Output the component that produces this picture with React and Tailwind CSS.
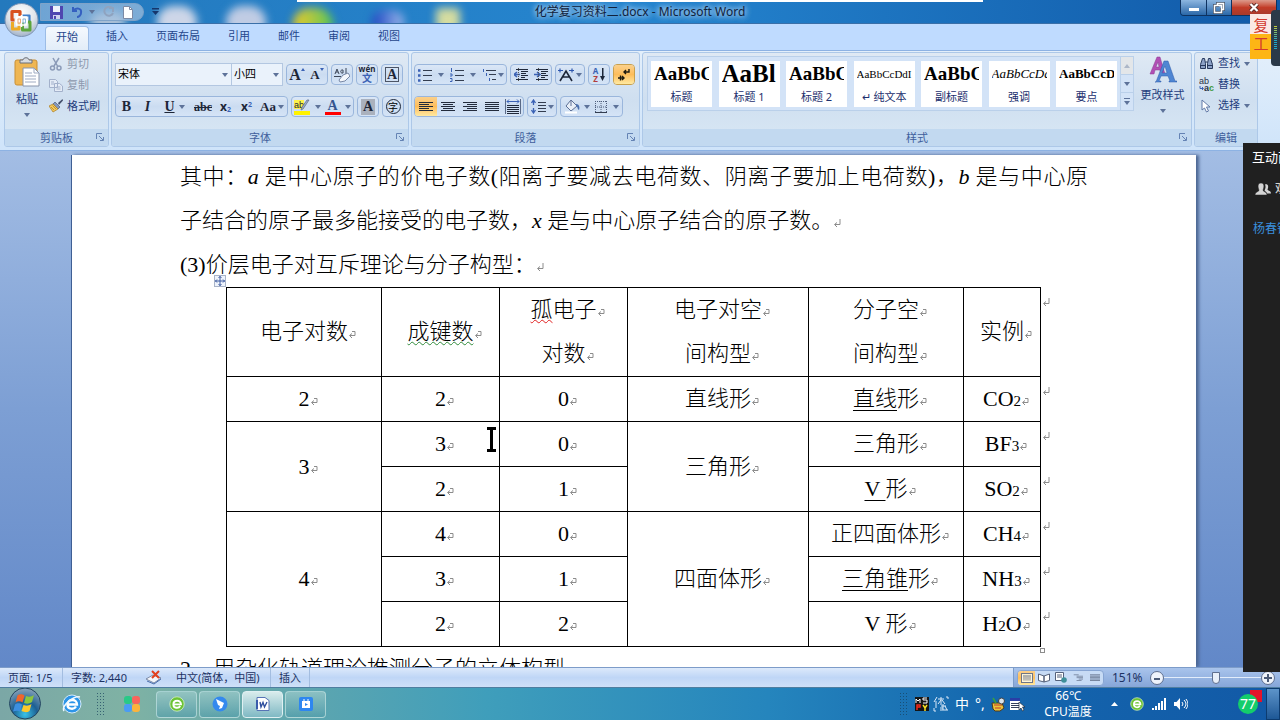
import { useState } from 'react';
import clsx from 'clsx';

const uiFont = "font-['Noto_Sans','Noto_Sans_CJK_SC',sans-serif]";
const docFont = "font-['Liberation_Serif','Noto_Sans_CJK_SC',serif]";

const tabs = ['开始', '插入', '页面布局', '引用', '邮件', '审阅', '视图'];

const styles = [
  { name: '标题', sample: 'AaBbC', look: 'text-[19px] font-bold' },
  { name: '标题 1', sample: 'AaBl', look: 'text-[25px] font-bold' },
  { name: '标题 2', sample: 'AaBbC', look: 'text-[19px] font-bold' },
  { name: '↵ 纯文本', sample: 'AaBbCcDdI', look: 'text-[11px]' },
  { name: '副标题', sample: 'AaBbC', look: 'text-[19px] font-bold' },
  { name: '强调', sample: 'AaBbCcDd', look: 'text-[13px] italic' },
  { name: '要点', sample: 'AaBbCcD', look: 'text-[13px] font-bold' },
];

function Caret({ className }) {
  return (
    <svg viewBox="0 0 6 4" className={clsx('h-1 w-1.5 shrink-0', className)}>
      <path d="M0 0h6L3 4z" fill="#5d7299" />
    </svg>
  );
}

function Strip({ children, className }) {
  return (
    <div className={clsx('flex h-[21px] shrink-0 items-stretch overflow-hidden rounded-sm border border-[#9ab6dc] bg-gradient-to-b from-[#dbe7f6] via-[#cbdcf1] to-[#d5e4f6]', className)}>
      {children}
    </div>
  );
}

function Tool({ label, children, className, caret, active }) {
  return (
    <button
      aria-label={label}
      className={clsx(
        'flex items-center justify-center',
        className || 'w-5 gap-0.5',
        active && 'bg-gradient-to-b from-[#fbd08a] via-[#fdbd5a] to-[#ffe9a0]'
      )}
    >
      {children}
      {caret && <Caret />}
    </button>
  );
}

function Group({ title, children, className, launcher = true }) {
  return (
    <section className={clsx('flex flex-col overflow-hidden rounded-[3px] border border-[#adc8e8] bg-gradient-to-b from-[#dfe9f4] via-[#cfdff0] to-[#d9e8f5]', className)}>
      <div className="flex-1">{children}</div>
      <div className="relative flex h-[17px] items-center justify-center bg-[#c2d9f0] text-[11px] leading-4 text-[#3f5f9c]">
        {title}
        {launcher && (
          <button aria-label={`${title}选项`} className="absolute right-1 top-1">
            <svg viewBox="0 0 8 8" className="h-2 w-2" fill="none" stroke="#6483b4">
              <path d="M.5 6V.5H6M3 3l4 4M7.500 4v3.500H4" />
            </svg>
          </button>
        )}
      </div>
    </section>
  );
}

function Lines({ rows, className, color = '#222b3c' }) {
  return (
    <svg viewBox="0 0 14 12" className={clsx(className || 'h-3 w-3.5')} stroke={color}>
      {rows.map(([x1, x2], i) => (
        <path key={i} d={`M${x1} ${i * 2 + 1.5}H${x2}`} />
      ))}
    </svg>
  );
}

const alignRows = {
  left: [[0, 14], [0, 10], [0, 14], [0, 10], [0, 14]],
  center: [[0, 14], [2, 12], [0, 14], [2, 12], [0, 14]],
  right: [[0, 14], [4, 14], [0, 14], [4, 14], [0, 14]],
  full: [[0, 14], [0, 14], [0, 14], [0, 14], [0, 14]],
};

function ListIcon({ kind }) {
  return (
    <svg viewBox="0 0 14 14" className="h-3.5 w-3.5" fill="none">
      {kind === 'multi' ? (
        <g>
          <path d="M4 2.500h10M7 6.500h7M10 11.500h4" stroke="#333d50" />
          <path d="M1.500 1v3M4.500 5v3M7.500 10v3" stroke="#3b62b5" />
        </g>
      ) : (
        <g>
          <path d="M5 2.500h9M5 7.500h9M5 12.500h9" stroke="#333d50" />
          {kind === 'bullet' ? (
            <path d="M0 2.500h2.500M0 7.500h2.500M0 12.500h2.500" stroke="#3b62b5" strokeWidth="2.500" />
          ) : (
            <path d="M1.500 0v4M0 6h2v2H0M0 10.500h2v3H0" stroke="#3b62b5" />
          )}
        </g>
      )}
    </svg>
  );
}

function IndentIcon({ right }) {
  return (
    <svg viewBox="0 0 15 14" className="h-3.5 w-[15px]" fill="none">
      <path d="M2 1.500h12M7 3.500h7M7 5.500h5M7 7.500h7M7 9.500h4M2 11.500h12" stroke="#20293a" />
      <path d={right ? 'M0 6.500h5M3 4l3 2.500L3 9' : 'M6 6.500H1M3 4L0 6.500 3 9'} stroke="#3b62b5" strokeWidth="1.500" />
      <path d="M4.500 0v13" stroke="#555" strokeDasharray="1 1" />
    </svg>
  );
}

function Clipboard() {
  return (
    <Group title="剪贴板" className="w-[105px]">
      <div className="flex">
        <button className="ml-1.5 mt-1 flex w-8 flex-col items-center text-[11px] leading-4 text-[#1f3d7c]">
          <svg viewBox="0 0 27 30" className="h-[30px] w-[27px]">
            <rect x="1" y="3" width="22" height="25" rx="2" fill="#efb652" stroke="#c98f35" />
            <path d="M6 6V3h3c0-3 6-3 6 0h3v3z" fill="#d8dce2" stroke="#6b6f78" />
            <path d="M9 11h11l5 5v13H9z" fill="#fff" stroke="#8894ab" />
            <path d="M20 11v5h5M11 16h7M11 19h11M11 22h11M11 25h11" fill="none" stroke="#9fabc2" />
          </svg>
          <span className="mt-1">粘贴</span>
          <Caret className="mt-1.5" />
        </button>
        <div className="ml-1.5 flex flex-col text-[11px] leading-5 text-[#1f3d7c]">
          <button className="flex h-[21px] items-center gap-1 text-[#8d99ae]">
            <svg viewBox="0 0 14 14" className="h-3.5 w-3.5" fill="none" stroke="#8b9bb8" strokeWidth="1.500">
              <path d="M4 1l4.500 8M10 1L5 9" />
              <circle cx="3.500" cy="11" r="2" />
              <circle cx="10" cy="11" r="2" />
            </svg>
            剪切
          </button>
          <button className="flex h-[21px] items-center gap-1 text-[#8d99ae]">
            <svg viewBox="0 0 14 14" className="h-3.5 w-3.5" fill="#e4ebf6" stroke="#a3b1cb">
              <path d="M.5 1.500h6l2 2v6h-8zM5.500 5.500h5l3 2.500v5.500h-8zM7.500 9h4M7.500 11h4M2 4h3M2 6h3" />
            </svg>
            复制
          </button>
          <button className="flex h-[21px] items-center gap-1">
            <svg viewBox="0 0 14 14" className="h-3.5 w-3.5">
              <path d="M13.500 0L9 4l1 2 4-4.500z" fill="#44506b" />
              <path d="M6 3l5 5-2 2-5-5z" fill="#8497bb" stroke="#4d5d7d" strokeWidth=".7" />
              <path d="M4 5L0 7l4 6 5-3z" fill="#f4c95c" stroke="#a97b22" strokeWidth=".7" />
              <path d="M2 8l3 3M3.500 6.500L7 10" stroke="#a97b22" strokeWidth=".7" />
            </svg>
            格式刷
          </button>
        </div>
      </div>
    </Group>
  );
}

function FontGroup() {
  const [font, setFont] = useState('宋体');
  const [size, setSize] = useState('小四');
  const serif = "font-['Liberation_Serif',serif] text-[#1d2638]";
  return (
    <Group title="字体" className="w-[298px]">
      <div className="flex flex-col gap-[10px] px-[3px] pt-2.5">
        <div className="flex h-[23px] items-center gap-[3px]">
          <div className="flex">
            <label className="relative flex w-[117px]">
              <select
                aria-label="字体"
                value={font}
                onChange={e => setFont(e.target.value)}
                className="h-[23px] w-full appearance-none border border-[#b3c7e1] bg-[#eaf2fb] pl-0.5 text-[11px] text-black"
              >
                <option>宋体</option>
                <option>黑体</option>
              </select>
              <Caret className="pointer-events-none absolute right-1 top-2.5" />
            </label>
            <label className="relative -ml-px flex w-[52px]">
              <select
                aria-label="字号"
                value={size}
                onChange={e => setSize(e.target.value)}
                className="h-[23px] w-full appearance-none border border-[#b3c7e1] bg-[#eaf2fb] pl-0.5 text-[11px] text-black"
              >
                <option>小四</option>
                <option>五号</option>
              </select>
              <Caret className="pointer-events-none absolute right-1 top-2.5" />
            </label>
          </div>
          <Strip>
            <Tool label="增大字体" className="w-5">
              <span className={clsx(serif, 'text-[16px] font-bold leading-4')}>A</span>
              <svg viewBox="0 0 4 3" className="-mt-2.5 h-[3px] w-1" fill="#3b62b5"><path d="M0 3h4L2 0z" /></svg>
            </Tool>
            <Tool label="缩小字体" className="w-5">
              <span className={clsx(serif, 'text-[13px] font-bold leading-4')}>A</span>
              <svg viewBox="0 0 4 3" className="-mt-2.5 h-[3px] w-1" fill="#3b62b5"><path d="M0 0h4L2 3z" /></svg>
            </Tool>
          </Strip>
          <Strip>
            <Tool label="清除格式">
              <svg viewBox="0 0 16 16" className="h-4 w-4" fill="none" stroke="#3d4759">
                <path d="M1 7l2-5 2 5M2 5h2M9 3c-3-1-3 4 0 3V3M12 1v6" />
                <path d="M0 9.500h7" />
                <path d="M9 8l5-2 2 3-5 5-5 1-1-2z" fill="#f4f7fc" stroke="#7787a5" />
              </svg>
            </Tool>
          </Strip>
          <Strip>
            <Tool label="拼音指南" className="w-5 flex-col">
              <span className="text-[8px] font-bold leading-[8px] text-[#1d2638]">wén</span>
              <span className="text-[10px] font-bold leading-[11px] text-[#3b62b5]">文</span>
            </Tool>
          </Strip>
          <Strip>
            <Tool label="字符边框">
              <span className={clsx(serif, 'border border-[#4c5566] px-px text-[14px] font-bold leading-[13px]')}>A</span>
            </Tool>
          </Strip>
        </div>
        <div className="flex h-[21px] items-center gap-[3px]">
          <Strip>
            <Tool label="加粗" className="w-[21px]"><b className={clsx(serif, 'text-[14px]')}>B</b></Tool>
            <Tool label="倾斜" className="w-[21px]"><i className={clsx(serif, 'text-[14px] font-bold')}>I</i></Tool>
            <Tool label="下划线" className="w-[33px] gap-1" caret><u className={clsx(serif, 'text-[14px] font-bold')}>U</u></Tool>
            <Tool label="删除线" className="w-6"><s className={clsx(serif, 'text-[12px] font-bold')}>abc</s></Tool>
            <Tool label="下标" className="w-[21px]"><span className="text-[12px] font-bold text-[#1d2638]">x<sub className="text-[7px] text-[#3b62b5]">2</sub></span></Tool>
            <Tool label="上标" className="w-[21px]"><span className="text-[12px] font-bold text-[#1d2638]">x<sup className="text-[7px] text-[#3b62b5]">2</sup></span></Tool>
            <Tool label="更改大小写" className="w-[30px] gap-0.5" caret><span className={clsx(serif, 'text-[13px] font-bold')}>Aa</span></Tool>
          </Strip>
          <Strip>
            <Tool label="突出显示" className="w-[30px] gap-1" caret>
              <svg viewBox="0 0 17 16" className="h-4 w-[17px]">
                <rect x="0" y="12" width="16" height="4" fill="#fff200" />
                <rect x="0" y="1" width="10" height="9" fill="#fdf24a" />
                <text x="0" y="9" fontSize="9" fill="#1d2638" fontFamily="Liberation Sans">ab</text>
                <path d="M15 1l-6 9-2 1 1-3 5-7z" fill="#9aacc9" stroke="#5a6a87" strokeWidth=".7" />
              </svg>
            </Tool>
            <Tool label="字体颜色" className="w-[31px] gap-1" caret>
              <span className="flex flex-col items-center">
                <b className="font-['Liberation_Serif',serif] text-[14px] leading-[13px] text-[#34548f]">A</b>
                <span className="h-[3px] w-4 bg-[#f00]" />
              </span>
            </Tool>
          </Strip>
          <Strip>
            <Tool label="字符底纹"><span className={clsx(serif, 'bg-[#aab1bd] px-0.5 text-[14px] font-bold leading-4')}>A</span></Tool>
          </Strip>
          <Strip>
            <Tool label="带圈字符"><span className="flex h-[15px] w-[15px] items-center justify-center rounded-full border border-[#1d2638] text-[10px] leading-3 text-black">字</span></Tool>
          </Strip>
        </div>
      </div>
    </Group>
  );
}

function ParagraphGroup() {
  return (
    <Group title="段落" className="w-[229px]">
      <div className="flex flex-col gap-[11px] px-0.5 pt-[11px]">
        <div className="flex items-center gap-[3px]">
          <Strip>
            <Tool label="项目符号" className="w-8 gap-1.5" caret><ListIcon kind="bullet" /></Tool>
            <Tool label="编号" className="w-8 gap-1.5" caret><ListIcon kind="number" /></Tool>
            <Tool label="多级列表" className="w-[27px] gap-0.5" caret><ListIcon kind="multi" /></Tool>
          </Strip>
          <Strip>
            <Tool label="减少缩进"><IndentIcon /></Tool>
            <Tool label="增加缩进"><IndentIcon right /></Tool>
          </Strip>
          <Strip>
            <Tool label="中文版式" className="w-7 gap-0.5" caret>
              <svg viewBox="0 0 16 14" className="h-3.5 w-4" fill="none" stroke="#1d2638" strokeWidth="1.600">
                <path d="M2 13l6-10 6 10M5 9h6" />
                <path d="M0 2.500h5M2 .5v4M11 2.500h5M14 .5v4" stroke="#2d56ad" strokeWidth="1.200" />
              </svg>
            </Tool>
          </Strip>
          <Strip>
            <Tool label="排序">
              <span className="flex flex-col text-[8px] font-bold leading-[8px]">
                <span className="text-[#3b62b5]">A</span>
                <span className="text-[#b23c3c]">Z</span>
              </span>
              <svg viewBox="0 0 5 13" className="h-[13px] w-[5px]" fill="#1d2638"><path d="M2 0h1.500v8H5l-2.500 5L0 8h2z" /></svg>
            </Tool>
          </Strip>
          <Strip className="border-[#c9a04c]">
            <Tool label="显示编辑标记" active>
              <svg viewBox="0 0 14 14" className="h-3.5 w-3.5" fill="none" stroke="#1d1a10" strokeWidth="1.400">
                <path d="M12 1v3H7M9 2L7 4l2 2M1 10h6M5 8l2 2-2 2M3.500 7.500v5" />
              </svg>
            </Tool>
          </Strip>
        </div>
        <div className="flex items-center gap-[3px]">
          <Strip>
            <Tool label="左对齐" active className="w-[22px]"><Lines rows={alignRows.left} /></Tool>
            <Tool label="居中" className="w-[22px]"><Lines rows={alignRows.center} /></Tool>
            <Tool label="右对齐" className="w-[22px]"><Lines rows={alignRows.right} /></Tool>
            <Tool label="两端对齐" className="w-[22px]"><Lines rows={alignRows.full} /></Tool>
            <Tool label="分散对齐">
              <svg viewBox="0 0 16 15" className="h-[15px] w-4" fill="none">
                <path d="M.5 0v15M15.500 0v15" stroke="#5a6a87" />
                <path d="M2 2.500h12M4 .5L2 2.500l2 2M12 .5l2 2-2 2" stroke="#3b62b5" />
                <path d="M2 6.500h12M2 8.500h12M2 10.500h12M2 12.500h12M2 14.500h12" stroke="#20293a" />
              </svg>
            </Tool>
          </Strip>
          <Strip>
            <Tool label="行距" className="w-7 gap-0.5" caret>
              <svg viewBox="0 0 15 15" className="h-[15px] w-[15px]" fill="none">
                <path d="M2.500 1v5M.5 4l2-3 2 3M2.500 9v5M.5 11l2 3 2-3" stroke="#3b62b5" strokeWidth="1.300" />
                <path d="M7 3.500h8M7 6.500h8M7 9.500h8M7 12.500h8" stroke="#333d50" />
              </svg>
            </Tool>
          </Strip>
          <Strip>
            <Tool label="底纹" className="w-[31px] gap-1" caret>
              <svg viewBox="0 0 16 15" className="h-[15px] w-4">
                <path d="M7 1l6 6-6 5-5-5z" fill="#e9eff8" stroke="#5c6f95" />
                <path d="M7 1v6" stroke="#5c6f95" />
                <path d="M12 5c3 0 4 3 3 6-2-1-1-4-3-4z" fill="#4a6fae" />
                <path d="M1 13.500h12" stroke="#fff" strokeWidth="2" />
              </svg>
            </Tool>
            <Tool label="框线" className="w-[30px] gap-1.5" caret>
              <svg viewBox="0 0 12 12" className="h-3 w-3" fill="none">
                <path d="M.5 0v12M11.500 0v12M0 .5h12M6 0v12M0 6h12" stroke="#4f5f7d" strokeDasharray="1 1" />
                <path d="M0 11.500h12" stroke="#333d50" />
              </svg>
            </Tool>
          </Strip>
        </div>
      </div>
    </Group>
  );
}

function StylesGroup() {
  return (
    <Group title="样式" className="min-w-0 flex-1">
      <div className="flex h-full pl-1 pt-[3px]">
        <div className="flex h-[55px] min-w-0 flex-1 border border-[#bad0ea] bg-[#d3e3f7]">
          <div className="flex min-w-0 flex-1 items-center justify-between px-[3px]">
            {styles.map(s => (
              <button key={s.name} className="flex h-[46px] w-[61px] flex-col overflow-hidden bg-white text-[11px] text-[#1c2f6e]">
                <span className="flex h-7 w-full items-center overflow-hidden px-[3px]">
                  <span className={clsx("overflow-hidden whitespace-nowrap font-['Liberation_Serif',serif] leading-7 text-black", s.look)}>{s.sample}</span>
                </span>
                <span className="w-full text-center leading-5">{s.name}</span>
              </button>
            ))}
          </div>
          <div className="flex w-[13px] flex-col divide-y divide-[#bad0ea] border-l border-[#bad0ea]">
            <button aria-label="上一行" className="flex flex-1 items-center justify-center bg-[#e3e6e9]"><Caret className="rotate-180 opacity-40" /></button>
            <button aria-label="下一行" className="flex flex-1 items-center justify-center"><Caret /></button>
            <button aria-label="其他" className="flex flex-1 flex-col items-center justify-center gap-0.5">
              <span className="h-px w-1.5 bg-[#5d7299]" />
              <Caret />
            </button>
          </div>
        </div>
        <button className="flex w-[57px] flex-col items-center text-[11px] leading-4 text-[#1f3d7c]">
          <svg viewBox="0 0 28 27" className="h-[27px] w-7">
            <path d="M1 18L8 1h3l5 17h-4l-1-4H6l-1 4zM7 11h3L9 6z" fill="#b14fb4" stroke="#8b3a92" strokeWidth=".5" />
            <path d="M6 26h1l8-21h4l7 20h2v1h-8v-1h1l-2-5h-7l-2 5h2v1zM13 17h5l-2-7z" fill="#4f86d3" stroke="#2d5ba8" strokeWidth=".5" />
          </svg>
          <span className="mt-1">更改样式</span>
          <Caret className="mt-1.5" />
        </button>
      </div>
    </Group>
  );
}

function EditGroup() {
  return (
    <Group title="编辑" className="w-[64px]" launcher={false}>
      <div className="flex flex-col pl-1 text-[11px] text-[#1f3d7c]">
        <button className="flex h-[21px] items-center gap-1 whitespace-nowrap">
          <svg viewBox="0 0 15 13" className="h-[13px] w-[15px]" fill="#8ba0c6" stroke="#27385c">
            <path d="M3.500 1.500h2l1 5v5h-5v-4zM9.500 1.500h2l2 6v4h-5v-5z" />
            <path d="M6.500 5h2M2 8.500h4M9 8.500h4" />
          </svg>
          查找<Caret />
        </button>
        <button className="flex h-[21px] items-center gap-1 whitespace-nowrap">
          <svg viewBox="0 0 15 15" className="h-[15px] w-[15px]" fontFamily="Liberation Sans" fontSize="9">
            <text x="0" y="7" fill="#2a3347">ab</text>
            <text x="5" y="14" fill="#2a3347" fontWeight="bold">a</text>
            <text x="10" y="14" fill="#3f9a3f" fontWeight="bold">c</text>
            <path d="M1 9v2.500h3M3 10l1.500 1.500L3 13" fill="none" stroke="#3b62b5" />
          </svg>
          替换
        </button>
        <button className="flex h-[21px] items-center gap-1 whitespace-nowrap">
          <svg viewBox="0 0 15 14" className="h-3.5 w-[15px]">
            <path d="M3 1v10l2.500-2 2 4 2-1-2-4H11z" fill="#fff" stroke="#6179a6" />
          </svg>
          选择<Caret />
        </button>
      </div>
    </Group>
  );
}

function TitleBar() {
  return (
    <header className="relative flex h-6 shrink-0 items-center justify-center overflow-hidden border-b border-[#3a6fa8] bg-gradient-to-r from-[#2479bd] via-[#2585cf] to-[#1159a8]">
      {/* desktop icons showing through the glass */}
      <div className="absolute left-[90px] top-3 h-6 w-9 rounded-full bg-[#a9bfd6] blur-xs" />
      <div className="absolute left-[157px] top-1.5 h-8 w-10 rounded-full bg-[#cdd6e8] blur-xs" />
      <div className="absolute left-[226px] top-1.5 h-8 w-10 rounded-full bg-[#c0cce4] blur-xs" />
      <div className="absolute left-[293px] top-2 h-8 w-10 rounded-full bg-gradient-to-r from-[#e8c820] to-[#4cc455] blur-xs" />
      <div className="absolute left-[372px] top-2.5 h-6 w-8 rounded-full bg-gradient-to-r from-[#1d3fc0] to-[#9eb7e8] blur-xs" />
      <div className="absolute left-[436px] top-2 h-6 w-6 rounded bg-[#d5dca0] blur-xs" />
      <div className="absolute left-[297px] top-0 h-0.5 w-[686px] bg-white" />
      <h1 className="relative text-[12px] leading-6 text-[#10223c] [text-shadow:0_0_6px_#cfe3f8,0_0_6px_#cfe3f8]">化学复习资料二.docx - Microsoft Word</h1>
      <div className="absolute left-10 top-[3px] flex h-[18px] w-[104px] items-center rounded-r-full border border-[#7ea3c9] bg-gradient-to-r from-[#8fb6dd]/70 to-[#b9cde4]/60 pl-[9px]">
        <button aria-label="保存" className="mr-2">
          <svg viewBox="0 0 13 13" className="h-[13px] w-[13px]"><path d="M0 0h13v13H0z" fill="#4f46b0" /><path d="M3 0h7v6H3z" fill="#eef1fb" /><path d="M3 9h7v4H3z" fill="#cfd2ee" /><path d="M4 10h2v3H4z" fill="#4f46b0" /></svg>
        </button>
        <button aria-label="撤消" className="flex items-center gap-1.5">
          <svg viewBox="0 0 12 12" className="h-3 w-3" fill="none" stroke="#3560c0" strokeWidth="2"><path d="M2 1v4h4M2 5c3-4 9-3 8 2 0 2-2 4-4 4" /></svg>
          <Caret />
        </button>
        <button aria-label="恢复" className="ml-2">
          <svg viewBox="0 0 12 12" className="h-3 w-3" fill="none" stroke="#8fa3bf" strokeWidth="2"><path d="M9 2a4.500 4.500 0 1 0 1 5M6 2h4v4" /></svg>
        </button>
        <button aria-label="新建" className="ml-2">
          <svg viewBox="0 0 10 13" className="h-[13px] w-2.5"><path d="M.5.5h6l3 3v9h-9z" fill="#fff" stroke="#7c8aa5" /><path d="M6.500.5v3h3" fill="none" stroke="#7c8aa5" /></svg>
        </button>
      </div>
      <button aria-label="自定义快速访问工具栏" className="absolute left-[152px] top-2">
        <svg viewBox="0 0 7 7" className="h-[7px] w-[7px]" fill="#16366b"><path d="M0 0h7v1.500H0zM0 3h7L3.500 7z" /></svg>
      </button>
      <div className="absolute right-[3px] top-0 flex h-4 overflow-hidden rounded-b border border-t-0 border-[#0e3260]">
        <button aria-label="最小化" className="flex w-[26px] items-center justify-center border-r border-[#0e3260] bg-gradient-to-b from-[#8db6e0] to-[#2a68a8]">
          <span className="mt-1 h-[3px] w-2.5 bg-white" />
        </button>
        <button aria-label="还原" className="flex w-[25px] items-center justify-center border-r border-[#0e3260] bg-gradient-to-b from-[#8db6e0] to-[#2a68a8]">
          <svg viewBox="0 0 12 12" className="h-3 w-3" fill="none">
            <path d="M4.500 1.500h6v6h-2v3h-7v-7h3z" stroke="#46546a" strokeWidth="3" />
            <path d="M4.500 3V1.500h6v6H9M1.500 3.500h7v7h-7z" stroke="#fff" strokeWidth="1.500" />
          </svg>
        </button>
        <button aria-label="关闭" className="flex w-11 items-center justify-center bg-gradient-to-b from-[#dc9a8c] via-[#c23c28] to-[#a83a2c]">
          <svg viewBox="0 0 10 9" className="h-[9px] w-2.5"><path d="M1.500 1l7 7M8.500 1l-7 7" stroke="#5c2d2a" strokeWidth="4" /><path d="M1.500 1l7 7M8.500 1l-7 7" stroke="#fff" strokeWidth="2.200" /></svg>
        </button>
      </div>
    </header>
  );
}

function OfficeButton() {
  return (
    <button aria-label="Office 按钮" className="absolute left-1 top-0.5 z-10">
      <svg viewBox="0 0 36 36" className="h-9 w-9">
        <defs>
          <radialGradient id="orb" cx=".5" cy=".3" r=".75">
            <stop offset="0" stopColor="#ffffff" />
            <stop offset=".55" stopColor="#dfe4ea" />
            <stop offset="1" stopColor="#97a9c2" />
          </radialGradient>
        </defs>
        <circle cx="17.500" cy="18" r="16.500" fill="url(#orb)" stroke="#7d94b5" />
        <g fill="none" strokeLinejoin="round">
          <path d="M10.500 18H8V9.500h8V14" stroke="#d8501f" strokeWidth="3.200" />
          <path d="M18.500 13.500h7v5.500" stroke="#3f7fca" strokeWidth="2.200" />
          <path d="M15 21.500V27H8.500v-7" stroke="#edaa26" strokeWidth="3" />
          <path d="M18.500 20.500V28H26v-8h-2" stroke="#5da53c" strokeWidth="3" />
          <path d="M12.500 15h10v8h-10zM17.500 13v12M11 19h13" stroke="#fff" strokeWidth="1.600" />
          <path d="M14 17h2.500v4H14z" stroke="#f0a878" />
          <path d="M19 17h2.500v4H19z" stroke="#8db8d8" />
        </g>
      </svg>
    </button>
  );
}

// paragraph mark; takes no width in a centred line unless inline
function Mark({ inline }) {
  return (
    <span className={clsx('inline-block', !inline && 'w-0')}>
      <svg viewBox="0 0 8 9" className="h-[9px] w-2 max-w-none" fill="none" stroke="#8c8c8c">
        <path d={inline ? 'M7 0v5.500H2M4 3.500l-2.500 2L4 8' : 'M4 1.500h3v4H2M4 3.500l-2.500 2L4 8'} />
      </svg>
    </span>
  );
}

function Cell({ children, rows = 1, last }) {
  return (
    <td rowSpan={rows} className="relative h-[45px] border border-black p-0">
      {children}
      <Mark />
      {last && <span className="absolute -right-2.5 top-0 leading-6"><Mark inline /></span>}
    </td>
  );
}

function Formula({ parts }) {
  return parts.map((p, i) => (i % 2 ? <span key={i} className="text-[15px] leading-none">{p}</span> : p));
}

function ShapeTable() {
  return (
    <table className="ml-[46px] table-fixed border-collapse text-center leading-[44px]">
      <colgroup>
        <col className="w-[155px]" />
        <col className="w-[118px]" />
        <col className="w-[128px]" />
        <col className="w-[181px]" />
        <col className="w-[155px]" />
        <col className="w-[77px]" />
      </colgroup>
      <tbody>
        <tr>
          <Cell>电子对数</Cell>
          <Cell><span className="underline decoration-[#2f8a3a] decoration-wavy decoration-1 underline-offset-2">成键数</span></Cell>
          <Cell><span className="underline decoration-[#e02020] decoration-wavy decoration-1 underline-offset-2">孤</span>电子<Mark /><br />对数</Cell>
          <Cell>电子对空<Mark /><br />间构型</Cell>
          <Cell>分子空<Mark /><br />间构型</Cell>
          <Cell last>实例</Cell>
        </tr>
        <tr>
          <Cell>2</Cell>
          <Cell>2</Cell>
          <Cell>0</Cell>
          <Cell>直线形</Cell>
          <Cell><u className="decoration-1 underline-offset-4">直线</u>形</Cell>
          <Cell last><Formula parts={['CO', '2']} /></Cell>
        </tr>
        <tr>
          <Cell rows={2}>3</Cell>
          <Cell>3</Cell>
          <Cell>0</Cell>
          <Cell rows={2}>三角形</Cell>
          <Cell>三角形</Cell>
          <Cell last><Formula parts={['BF', '3']} /></Cell>
        </tr>
        <tr>
          <Cell>2</Cell>
          <Cell>1</Cell>
          <Cell><u className="decoration-1 underline-offset-4">V </u>形</Cell>
          <Cell last><Formula parts={['SO', '2']} /></Cell>
        </tr>
        <tr>
          <Cell rows={3}>4</Cell>
          <Cell>4</Cell>
          <Cell>0</Cell>
          <Cell rows={3}>四面体形</Cell>
          <Cell>正四面体形</Cell>
          <Cell last><Formula parts={['CH', '4']} /></Cell>
        </tr>
        <tr>
          <Cell>3</Cell>
          <Cell>1</Cell>
          <Cell><u className="decoration-1 underline-offset-4">三角锥</u>形</Cell>
          <Cell last><Formula parts={['NH', '3']} /></Cell>
        </tr>
        <tr>
          <Cell>2</Cell>
          <Cell>2</Cell>
          <Cell>V 形</Cell>
          <Cell last><Formula parts={['H', '2', 'O']} /></Cell>
        </tr>
      </tbody>
    </table>
  );
}

function Document() {
  return (
    <main className="min-h-0 flex-1 overflow-hidden bg-gradient-to-b from-[#a3bde4] via-[#7d9fd4] to-[#6288c8] pl-[71px] pr-[84px] pt-1">
      <article className={clsx('relative h-full overflow-hidden border-l border-[#3f5f94] bg-white px-[108px] text-[22px] font-light leading-[44px] text-black shadow-[3px_0_3px_#4d6894]', docFont)}>
        <p>
          <span className="block text-justify [text-align-last:justify]">
            其中：<i>a</i> 是中心原子的价电子数(阳离子要减去电荷数、阴离子要加上电荷数)，<i>b</i> 是与中心原
          </span>
          子结合的原子最多能接受的电子数，<i>x</i> 是与中心原子结合的原子数。<Mark inline />
        </p>
        <p>(3)价层电子对互斥理论与分子构型：<Mark inline /></p>
        <div className="relative w-fit">
          <ShapeTable />
          <span className="absolute -top-3 left-[34px] flex h-3 w-3 items-center justify-center border border-[#a9b4c8] bg-[#eef3fb]">
            <svg viewBox="0 0 10 10" className="h-2.5 w-2.5" fill="none" stroke="#3c5ba0"><path d="M5 0v10M0 5h10M3.500 2L5 .5 6.500 2M3.500 8L5 9.500 6.500 8M2 3.500L.5 5 2 6.500M8 3.500L9.500 5 8 6.500" /></svg>
          </span>
          <span className="absolute -bottom-1.5 -right-1 h-[5px] w-[5px] border border-[#8c8c8c] bg-white" />
          <svg viewBox="0 0 11 25" className="absolute left-[306px] top-[140px] h-[25px] w-[11px]" fill="none" stroke="#000" strokeWidth="3">
            <path d="M1 1.500h9M1 23.500h9M5.500 1v23" />
          </svg>
        </div>
        <p>2．用杂化轨道理论推测分子的立体构型</p>
      </article>
    </main>
  );
}

function StatusBar() {
  const [zoom, setZoom] = useState(54);
  return (
    <footer className="flex h-5 shrink-0 items-stretch border-t border-[#7d9cc9] bg-gradient-to-b from-[#dce9fb] via-[#bfd6f6] to-[#cfe0f8] text-[11px] leading-[19px] text-[#1d3263]">
      <span className="w-[63px] border-r border-[#a3bde0] pl-2">页面: 1/5</span>
      <span className="w-[75px] pl-2">字数: 2,440</span>
      <button aria-label="校对错误" className="flex w-[38px] items-center pl-2">
        <svg viewBox="0 0 16 15" className="h-[15px] w-4"><path d="M0 9l7-4 8 3-7 5z" fill="#f3f6fb" stroke="#7c8aa5" /><path d="M1 11l7 3 7-5" fill="none" stroke="#4a6fae" /><path d="M6 1l7 7M13 1L6 8" stroke="#e2401e" strokeWidth="2" /></svg>
      </button>
      <span className="w-[95px] border-r border-[#a3bde0]">中文(简体，中国)</span>
      <span className="w-[39px] border-r border-[#a3bde0] pl-2">插入</span>
      <div className="ml-auto flex w-[267px] items-center border-l border-[#7d9cc9] bg-gradient-to-b from-[#a9c4ec] to-[#86a6d8] pl-[3px]">
        <div className="flex h-4 w-[87px] overflow-hidden rounded-sm border border-[#87a5d3] bg-[#c7dbf5]">
          <Tool label="页面视图" active className="w-[17px]"><span className="border border-[#6d7688] bg-[#fff6d8] px-px"><Lines rows={alignRows.full} color="#6d7688" className="h-2 w-2" /></span></Tool>
          <Tool label="阅读版式" className="w-[17px]"><svg viewBox="0 0 12 10" className="h-2.5 w-3" fill="#fff" stroke="#55617a"><path d="M.5 1l5.500 2v6L.5 7.500zM11.500 1L6 3v6l5.500-1.500z" /></svg></Tool>
          <Tool label="Web 版式" className="w-[17px]"><svg viewBox="0 0 12 11" className="h-[11px] w-3"><path d="M.5.5h8v8h-8zM2 3h5M2 5h5" fill="#fff" stroke="#55617a" /><circle cx="9" cy="8" r="2.800" fill="#3f8f9a" /></svg></Tool>
          <Tool label="大纲视图" className="w-[17px]"><Lines rows={[[1, 8], [5, 14], [5, 14], [8, 14], [5, 12]]} color="#66728b" className="h-2.5 w-2.5" /></Tool>
          <Tool label="普通视图" className="w-[17px]"><Lines rows={alignRows.full} color="#55617a" className="h-2.5 w-2.5" /></Tool>
        </div>
        <span className="ml-2 w-9 text-[12px]">151%</span>
        <button aria-label="缩小" className="ml-0.5 h-3.5 w-3.5 shrink-0 rounded-full border border-[#5f6f8f] bg-[#eef3fb] p-[3px]"><span className="mt-[2px] block h-0.5 w-full bg-[#4b5b78]" /></button>
        <input
          type="range"
          aria-label="显示比例"
          min="0"
          max="100"
          value={zoom}
          onChange={e => setZoom(Number(e.target.value))}
          className="h-3.5 min-w-0 flex-1 appearance-none bg-[linear-gradient(#e3edfb,#e3edfb)] bg-[length:100%_1px] bg-center bg-no-repeat [&::-webkit-slider-thumb]:h-3 [&::-webkit-slider-thumb]:w-2 [&::-webkit-slider-thumb]:appearance-none [&::-webkit-slider-thumb]:rounded-b-full [&::-webkit-slider-thumb]:border [&::-webkit-slider-thumb]:border-[#5f6f8f] [&::-webkit-slider-thumb]:bg-[#e8eff9]"
        />
        <button aria-label="放大" className="mr-[5px] flex h-3.5 w-3.5 shrink-0 items-center justify-center rounded-full border border-[#5f6f8f] bg-[#eef3fb]">
          <svg viewBox="0 0 8 8" className="h-2 w-2" stroke="#4b5b78" strokeWidth="2"><path d="M4 0v8M0 4h8" /></svg>
        </button>
      </div>
    </footer>
  );
}

function BrowserIcon({ green, className }) {
  return (
    <svg viewBox="0 0 20 20" className={className}>
      <circle cx="10" cy="10" r="9" fill={green ? '#6cc335' : '#2d95e8'} stroke={green ? '#d8f0c4' : '#d3eafb'} />
      <path d="M5 10.500h10c0-6-9.500-6-9.500 0 0 5 6.500 5.500 8.500 2" fill="none" stroke="#fff" strokeWidth="2.400" />
      {!green && <path d="M2 17C-1 12 12 1 18 3" fill="none" stroke="#eef8ff" strokeWidth="1.500" />}
    </svg>
  );
}

function TaskButton({ label, active, children }) {
  return (
    <button
      aria-label={label}
      className={clsx(
        'flex h-[27px] w-[41px] items-center justify-center rounded-sm border',
        active ? 'border-[#dff0f2] bg-gradient-to-b from-[#d8ecec] to-[#7fb9c4]' : 'border-[#b9dcdc]/80 bg-gradient-to-b from-[#9fcccb]/70 to-[#4f9cab]/60'
      )}
    >
      {children}
    </button>
  );
}

function Grip() {
  return <span className="h-6 w-2 bg-[radial-gradient(#17405c_1px,transparent_1px)] bg-[length:3px_3px] opacity-70" />;
}

function Taskbar() {
  return (
    <nav className="flex h-[33px] shrink-0 items-center overflow-hidden border-t border-[#4f7ea0] bg-[linear-gradient(to_right,#7ba7a6_0%,#7fb2a4_10%,#5ba5b0_25%,#3f9ebb_38%,#2585bd_60%,#1466ae_78%,#1259a6_100%)]">
      <button aria-label="开始菜单" className="ml-2">
        <svg viewBox="0 0 34 32" className="h-8 w-[34px]">
          <defs>
            <radialGradient id="start" cx=".5" cy=".85" r=".8">
              <stop offset="0" stopColor="#38c3e8" />
              <stop offset=".5" stopColor="#1c5f93" />
              <stop offset="1" stopColor="#7f9db5" />
            </radialGradient>
          </defs>
          <circle cx="17" cy="15.500" r="15.500" fill="url(#start)" stroke="#24465f" />
          <path d="M9.500 7.500c3-2 5-1 7 0l-2 7c-2-1-4-2-7 0z" fill="#f0652a" />
          <path d="M18 8c3 1 5 1 8-1l-2 7c-3 2-5 2-8 1z" fill="#8cc63e" />
          <path d="M7 16.500c3-2 5-1 7 0l-2 7c-2-1-4-1-7 0z" fill="#3d8fe0" />
          <path d="M15.500 17c3 1 5 1 8-1l-2 7c-3 2-5 1-8 0z" fill="#fcc82c" />
        </svg>
      </button>
      <button aria-label="浏览器" className="ml-5"><BrowserIcon className="h-5 w-5" /></button>
      <span className="ml-3.5 flex"><Grip /></span>
      <button aria-label="四叶草" className="ml-5">
        <svg viewBox="0 0 16 16" className="h-4 w-4">
          <rect width="8" height="8" rx="3" fill="#29c987" /><rect x="8" width="8" height="8" rx="3" fill="#f8655c" />
          <rect y="8" width="8" height="8" rx="3" fill="#4a9cf5" /><rect x="8" y="8" width="8" height="8" rx="3" fill="#fcb43c" />
        </svg>
      </button>
      <div className="ml-4 flex gap-0.5">
        <TaskButton label="360 浏览器"><BrowserIcon green className="h-4 w-4" /></TaskButton>
        <TaskButton label="钉钉">
          <svg viewBox="0 0 16 16" className="h-4 w-4"><circle cx="8" cy="8" r="7.500" fill="#3489ee" /><path d="M4 3l8 4-2 5-3 1 1-3-2-1z" fill="#fff" /></svg>
        </TaskButton>
        <TaskButton label="Word" active>
          <svg viewBox="0 0 14 14" className="h-3.5 w-3.5"><path d="M1 .5h8l4 3v10H1z" fill="#fff" stroke="#5673b5" /><path d="M0 3h2v9H0z" fill="#3a5cab" /><path d="M4 5l1 5 2-4.500L8.500 10 11 5" fill="none" stroke="#2f4f9f" strokeWidth="1.400" /></svg>
        </TaskButton>
        <TaskButton label="课堂">
          <svg viewBox="0 0 14 14" className="h-3.5 w-3.5"><rect width="14" height="14" rx="2" fill="#2e86f0" /><path d="M3 4h8v7H3z" fill="#fff" /><path d="M5 2v2M9 2v2" stroke="#fff" /><path d="M6 6l3 1.500L6 9z" fill="#2e86f0" /></svg>
        </TaskButton>
      </div>
      <div className="ml-auto flex h-full items-center text-white">
        <Grip />
        <svg viewBox="0 0 14 14" className="ml-2 h-3.5 w-3.5"><path d="M0 0h14v14H0z" fill="#151515" /><path d="M1 6V2l2 2 2-2v4M12 1H8v2h4v3H8" fill="none" stroke="#fff" /><path d="M2 13V8h3v2H2" fill="none" stroke="#f02a1c" strokeWidth="1.500" /><path d="M8 8l2 3 2-3M10 11v3" fill="none" stroke="#f7df22" strokeWidth="1.500" /></svg>
        <svg viewBox="0 0 16 16" className="ml-1 h-4 w-4" fill="none" stroke="#dbe9f8"><path d="M4 1L1 6M3 5v7M5 3h6M8 1v8M8 4L5 8M9 4l3 4M13 1h2v2M1 12v3h2M8 10h5M10 8v6M7 14h8M12 10l2 4M7 12h3" /></svg>
        <span className="ml-1.5 w-4 text-[14px] leading-5">中</span>
        <span className="ml-1 w-4 text-[14px] leading-5">°,</span>
        <svg viewBox="0 0 15 15" className="h-[15px] w-[15px]"><path d="M1 6h10l2 5-4 3H4l-2-2z" fill="#e9c53a" stroke="#4f3a1a" /><path d="M3 8h8M4 11h6" stroke="#c23b2c" /><circle cx="10.500" cy="4" r="3" fill="#d9e3ea" stroke="#3a3f44" /><path d="M2 1l3 5" stroke="#37a13f" strokeWidth="1.500" /></svg>
        <svg viewBox="0 0 15 15" className="ml-1 h-[15px] w-[15px]"><path d="M0 1h10v12H0z" fill="#fff" /><path d="M0 1h10v3H0z" fill="#2a3ea6" /><path d="M1 6.500h8M1 8.500h8M1 10.500h8" stroke="#35405c" /><path d="M9 5v8l2-2 1.500 3 1.500-1-1.500-3H15z" fill="#fff" stroke="#1f2937" strokeWidth=".7" /></svg>
        <div className="ml-4 w-[54px] whitespace-nowrap text-center text-[12px] leading-4">66℃<br />CPU温度</div>
        <button aria-label="显示隐藏的图标" className="ml-4"><svg viewBox="0 0 7 4" className="h-1 w-[7px]" fill="#fff"><path d="M0 4L3.500 0 7 4z" /></svg></button>
        <BrowserIcon green className="ml-3 h-3.5 w-3.5" />
        <svg viewBox="0 0 14 12" className="ml-2 h-3 w-3.5" fill="#fff"><path d="M0 10h2v2H0zM3 8h2v4H3zM6 5h2v7H6zM9 3h2v9H9zM12 0h2v12h-2z" /></svg>
        <svg viewBox="0 0 14 12" className="ml-2 h-3 w-3.5" fill="#fff"><path d="M0 4h2.500L6 0v12L2.500 8H0z" /><path d="M8 4q2 2 0 4M10 2q4 4 0 8M12 1q4 5 0 10" fill="none" stroke="#fff" /></svg>
        <span className="relative ml-[50px] h-5 w-5">
          <span className="absolute -right-1 -top-1 h-3 w-3 bg-[#e5142a]" />
          <span className="relative flex h-5 w-5 items-center justify-center rounded-full bg-[#14cd6b] text-[14px] leading-4">77</span>
        </span>
        <button aria-label="显示桌面" className="ml-2 h-full w-3.5 border border-[#0d3c70] bg-gradient-to-b from-[#5d94c9] to-[#1d5896]" />
      </div>
    </nav>
  );
}

function SidePanel() {
  return (
    <aside className="absolute bottom-12 right-0 top-[143px] w-[37px] overflow-hidden whitespace-nowrap bg-[#202020] text-[12px] leading-4 text-white">
      <h2 className="ml-[9px] mt-1.5 text-[13px]">互动面板</h2>
      <div className="ml-3 mt-4 flex items-center gap-1 text-[#d4d4d4]">
        <svg viewBox="0 0 16 12" className="h-3 w-4 shrink-0" fill="#d4d4d4"><path d="M10 1.500c3-1 4 2 2.500 5 .5 1.500 3.500 1 3.500 4h-4c-.5-2-2-2-2.500-3 1-2 1.500-4 .5-6z" /><path d="M6 0c4 0 3 5 2 7 0 2 4 1.500 4 5H0c0-3.500 4-3 4-5C3 5 2 0 6 0z" stroke="#202020" strokeWidth=".5" /></svg>
        观众
      </div>
      <p className="ml-2.5 mt-6 text-[#3a8fdc]">杨春锋</p>
    </aside>
  );
}

export default function App() {
  const [tab, setTab] = useState('开始');
  return (
    <div className={clsx('relative flex h-screen w-full flex-col overflow-hidden bg-[#bfdbff]', uiFont)}>
      <TitleBar />
      <OfficeButton />
      <div className="flex h-[26px] shrink-0 items-end bg-[#bfdbff] pl-[45px] text-[11px]">
        {tabs.map(t => (
          <button
            key={t}
            onClick={() => setTab(t)}
            className={clsx(
              'mr-1.5 h-6 rounded-t pb-1 leading-[18px] text-[#25468c]',
              tab === t ? 'border border-b-0 border-[#9cbce6] bg-gradient-to-b from-[#f5f9fe] to-[#e2edf8] px-2.5' : 'px-[11px]'
            )}
          >
            {t}
          </button>
        ))}
      </div>
      <div className="flex h-[101px] shrink-0 gap-0.5 border-y border-[#8db2e3] bg-gradient-to-b from-[#e3effb] to-[#cfe4fa] pb-[3px] pl-1 pr-[22px] pt-px">
        <Clipboard />
        <FontGroup />
        <ParagraphGroup />
        <StylesGroup />
        <EditGroup />
      </div>
      <Document />
      <StatusBar />
      <Taskbar />
      <SidePanel />

      {/* floating desktop widgets */}
      <div className="absolute right-2 top-3.5 flex h-[45px] w-[22px] flex-col items-center bg-gradient-to-b from-[#fbe9e4] from-45% to-[#fdb515] to-45% pt-0.5 text-[15px] leading-[18px] text-[#d2392e]">
        <span>复</span>
        <span>工</span>
      </div>
      <div className="absolute right-0 top-2.5 flex h-14 w-[9px] justify-center rounded-l bg-[#2b3a49] py-4">
        <span className="w-[3px] bg-[repeating-linear-gradient(transparent_0_1px,#2b3a49_1px_2px),linear-gradient(#c8cf35,#1fa6c8_60%)]" />
      </div>
    </div>
  );
}
